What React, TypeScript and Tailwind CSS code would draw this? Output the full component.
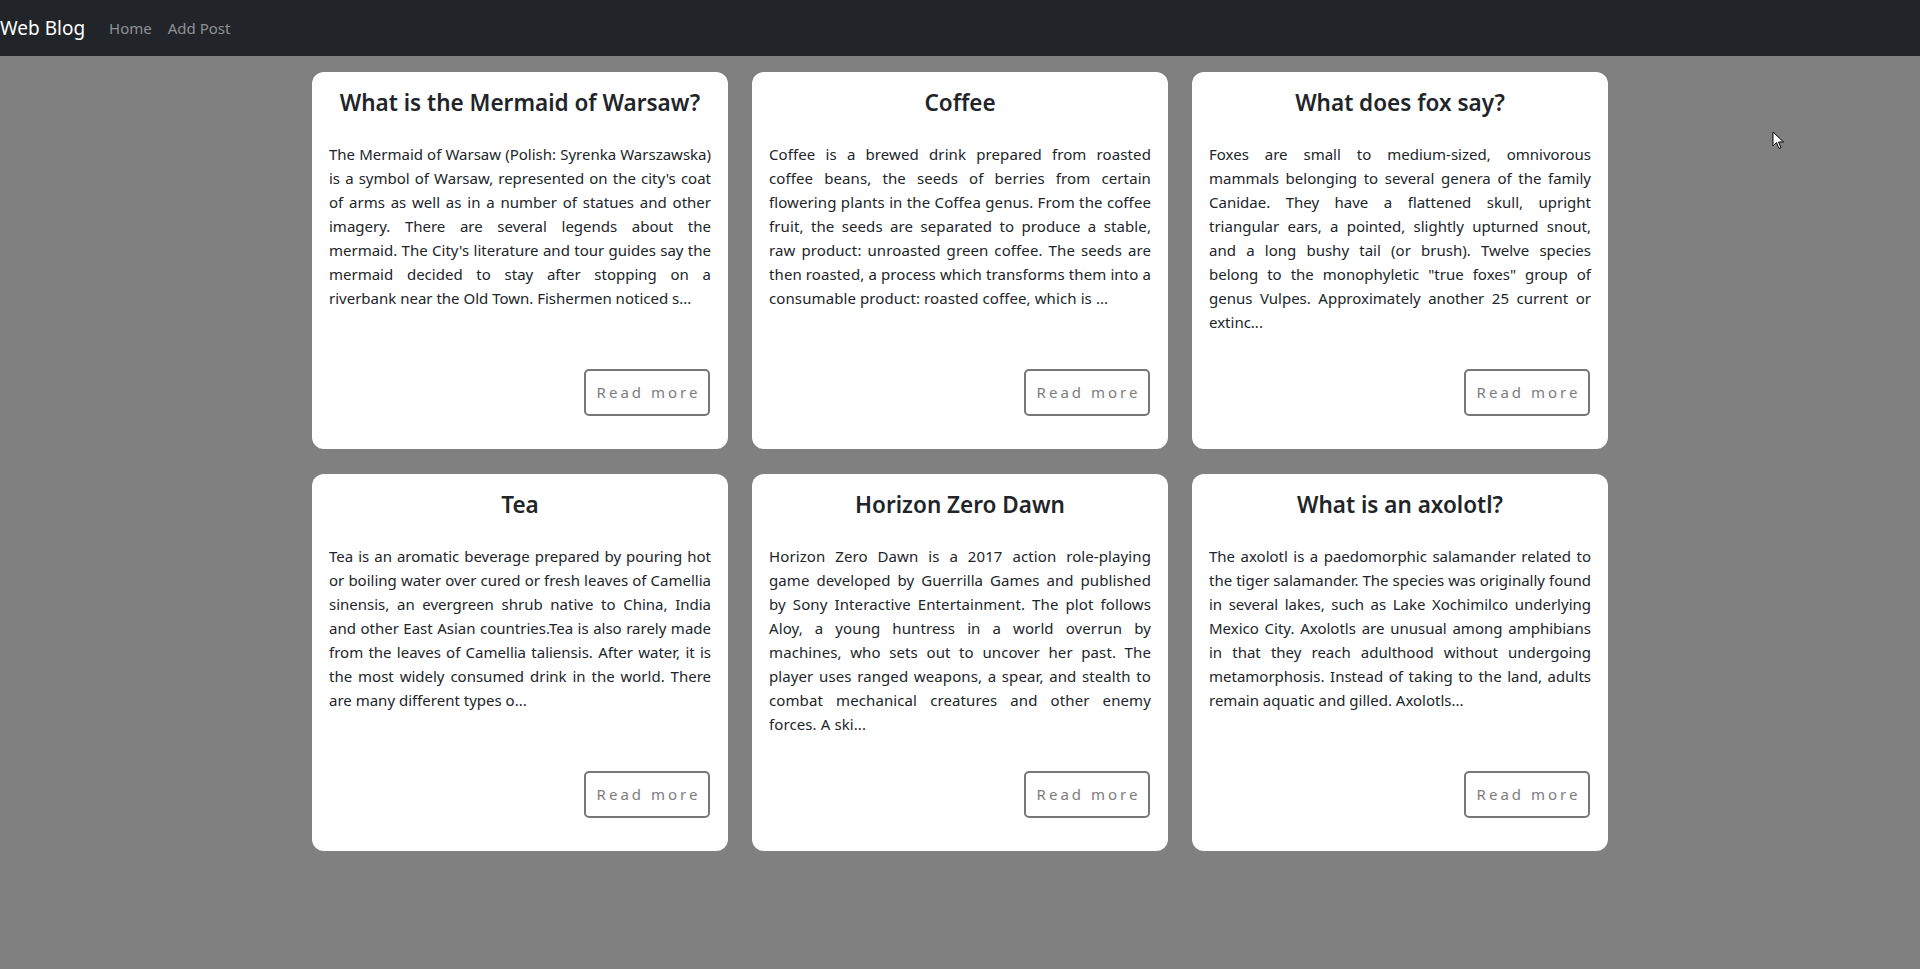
import React from "react";

type Post = {
  title: string;
  excerpt: string;
  wide?: boolean;
};

const posts: Post[] = [
  {
    title: "What is the Mermaid of Warsaw?",
    excerpt:
      "The Mermaid of Warsaw (Polish: Syrenka Warszawska) is a symbol of Warsaw, represented on the city's coat of arms as well as in a number of statues and other imagery. There are several legends about the mermaid. The City's literature and tour guides say the mermaid decided to stay after stopping on a riverbank near the Old Town. Fishermen noticed s...",
  },
  {
    title: "Coffee",
    excerpt:
      "Coffee is a brewed drink prepared from roasted coffee beans, the seeds of berries from certain flowering plants in the Coffea genus. From the coffee fruit, the seeds are separated to produce a stable, raw product: unroasted green coffee. The seeds are then roasted, a process which transforms them into a consumable product: roasted coffee, which is ...",
    wide: true,
  },
  {
    title: "What does fox say?",
    excerpt:
      "Foxes are small to medium-sized, omnivorous mammals belonging to several genera of the family Canidae. They have a flattened skull, upright triangular ears, a pointed, slightly upturned snout, and a long bushy tail (or brush). Twelve species belong to the monophyletic \"true foxes\" group of genus Vulpes. Approximately another 25 current or extinc...",
  },
  {
    title: "Tea",
    excerpt:
      "Tea is an aromatic beverage prepared by pouring hot or boiling water over cured or fresh leaves of Camellia sinensis, an evergreen shrub native to China, India and other East Asian countries.Tea is also rarely made from the leaves of Camellia taliensis. After water, it is the most widely consumed drink in the world. There are many different types o...",
  },
  {
    title: "Horizon Zero Dawn",
    excerpt:
      "Horizon Zero Dawn is a 2017 action role-playing game developed by Guerrilla Games and published by Sony Interactive Entertainment. The plot follows Aloy, a young huntress in a world overrun by machines, who sets out to uncover her past. The player uses ranged weapons, a spear, and stealth to combat mechanical creatures and other enemy forces. A ski...",
    wide: true,
  },
  {
    title: "What is an axolotl?",
    excerpt:
      "The axolotl is a paedomorphic salamander related to the tiger salamander. The species was originally found in several lakes, such as Lake Xochimilco underlying Mexico City. Axolotls are unusual among amphibians in that they reach adulthood without undergoing metamorphosis. Instead of taking to the land, adults remain aquatic and gilled. Axolotls...",
  },
];

function PostCard({ post }: { post: Post }) {
  return (
    <div className="flex h-[377px] flex-col rounded-xl bg-white px-[17px] pt-[17px] pb-[33px]">
      <h2 className="text-center text-[22.5px] leading-[1.2] font-semibold text-[#212529]">
        {post.title}
      </h2>
      <p
        className={
          post.wide
            ? "mt-[26px] text-justify text-[15px] leading-6 tracking-[0.1px] text-[#212529]"
            : "mt-[26px] text-justify text-[15px] leading-6 text-[#212529]"
        }
      >
        {post.excerpt}
      </p>
      <button className="mt-auto mr-[1px] flex h-[47px] w-[126px] items-center justify-center self-end rounded-[5px] border-2 border-[#777777] bg-white pl-[3px] text-[15px] tracking-[3px] text-[#7d7d7d]">
        Read more
      </button>
    </div>
  );
}

export default function App() {
  return (
    <div
      className="relative min-h-screen bg-[#808080]"
      style={{ fontFamily: '"Noto Sans", "Open Sans", sans-serif' }}
    >
      <nav className="flex h-[56px] items-center bg-[#212529]">
        <span className="text-[19px] text-white">Web Blog</span>
        <div className="ml-[24px] flex items-center gap-[16px] text-[15px] text-[#8f9193]">
          <a href="#">Home</a>
          <a href="#">Add Post</a>
        </div>
      </nav>

      <main className="mx-auto mt-4 grid w-[1296px] grid-cols-3 gap-x-6 gap-y-[25px]">
        {posts.map((p) => (
          <PostCard key={p.title} post={p} />
        ))}
      </main>

      {/* mouse pointer seen in the screenshot */}
      <svg
        className="absolute top-[131px] left-[1772px]"
        width="13"
        height="20"
        viewBox="0 0 13 20"
      >
        <path
          d="M1 1 L1 15 L4.5 11.5 L7 17.5 L9 16.5 L6.5 11 L11.5 11 Z"
          fill="white"
          stroke="black"
          strokeWidth="1"
          strokeLinejoin="round"
        />
      </svg>
    </div>
  );
}
